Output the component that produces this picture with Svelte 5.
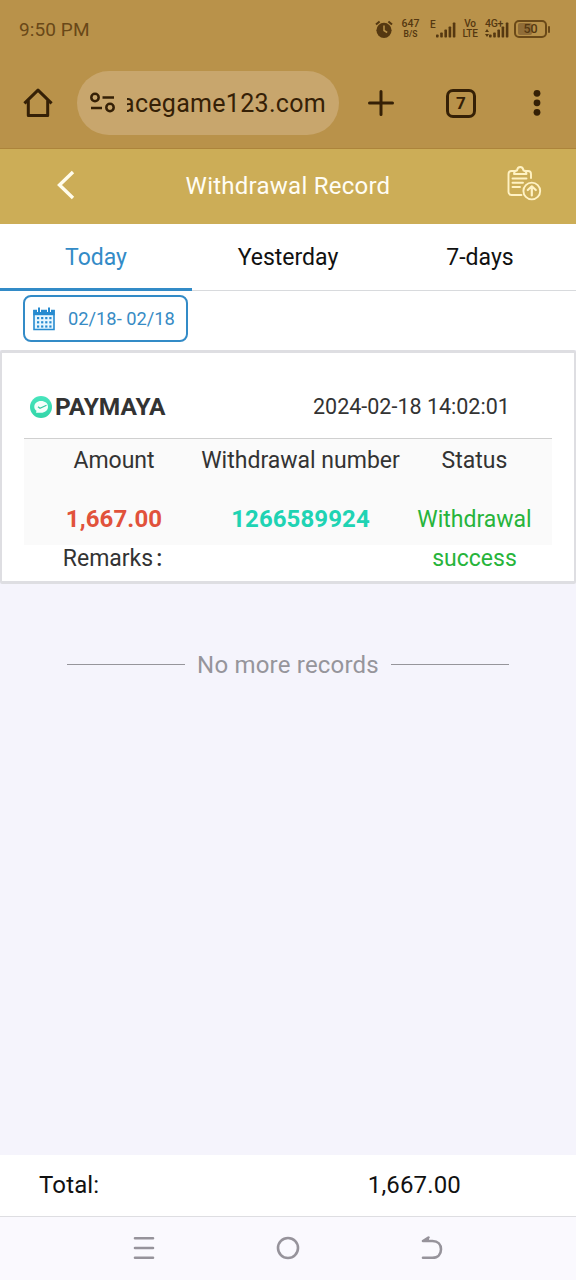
<script>
  const tabs = ['Today', 'Yesterday', '7-days'];
  let active = $state(0);
  const bars = [3, 5, 8, 11, 15];
  const dots = [0, 1, 2, 3].flatMap((c) => [0, 1, 2].map((r) => [4 + c * 4.1, 10 + r * 4.2]));
</script>

{#snippet signal()}
  <svg width="20" height="16" viewBox="0 0 20 16">
    {#each bars as h, i}
      <rect x={i * 4.2} y={15.5 - h} width="2.6" height={h} rx="0.7" fill="currentColor" />
    {/each}
  </svg>
{/snippet}

<div class="screen">
  <div class="status">
    <span class="clock">9:50 PM</span>
    <svg class="alarm" width="18" height="19" viewBox="0 0 18 19">
      <circle cx="9" cy="10.3" r="7.6" fill="currentColor" />
      <path d="M1 4.6 4.6 1.4M17 4.6 13.4 1.4" stroke="currentColor" stroke-width="2" fill="none" />
      <path d="M9 5.5v5l3.2 2" stroke="#b9924a" stroke-width="1.5" fill="none" />
    </svg>
    <div class="tiny speed"><span>647</span><small>B/S</small></div>
    <div class="sim one"><span>E</span>{@render signal()}</div>
    <div class="tiny volte"><span>Vo</span><span>LTE</span></div>
    <div class="sim two">
      <span>4G+</span>
      <div class="bars">
        <svg width="4" height="9" viewBox="0 0 4 9"><path d="M0 3 2 0l2 3zM0 5h4L2 8z" fill="currentColor" /></svg>
        {@render signal()}
      </div>
    </div>
    <div class="battery"><i></i><b>50</b></div>
    <div class="cap"></div>
  </div>

  <div class="browser">
    <svg class="home" width="30" height="30" viewBox="0 0 30 30" fill="none" stroke="currentColor" stroke-width="3">
      <path d="M1.4 15.3 15 2.2l13.600 13.100M5.300 12.500V27.500H24.700V12.500" stroke-linejoin="round" />
    </svg>
    <div class="url">
      <svg width="26" height="22" viewBox="0 0 26 22" fill="none" stroke="currentColor" stroke-width="2.500">
        <circle cx="5" cy="5.500" r="3.700" /><path d="M12.500 5.500H24M1 16H12" />
        <circle cx="20" cy="15.500" r="3.700" />
      </svg>
      <div class="address"><span>acegame123.com</span></div>
    </div>
    <svg class="plus" width="26" height="26" viewBox="0 0 26 26" stroke="currentColor" stroke-width="3" stroke-linecap="round">
      <path d="M13 1.500v23M1.500 13h23" />
    </svg>
    <div class="count">7</div>
    <svg class="more" width="8" height="28" viewBox="0 0 8 28" fill="currentColor">
      <circle cx="4" cy="4.300" r="3.400" /><circle cx="4" cy="13.800" r="3.400" /><circle cx="4" cy="23.300" r="3.400" />
    </svg>
  </div>

  <header>
    <svg class="back" width="20" height="30" viewBox="0 0 20 30" fill="none" stroke="#fffceb" stroke-width="3.400">
      <path d="M18 2 4.500 15 18 28" />
    </svg>
    <h1>Withdrawal Record</h1>
    <svg class="clip" width="36" height="36" viewBox="0 0 36 36" fill="none" stroke="#fff2c4" stroke-width="1.900" stroke-linecap="round" stroke-linejoin="round">
      <path d="M8.500 5H5.500Q2.500 5 2.500 8V26Q2.500 29 5.500 29H15.500M20 5H22Q25 5 25 8V12" />
      <path d="M8 8Q8 4.500 11 4.500Q11.500 1 14.200 1Q17 1 17.500 4.500Q20.500 4.500 20.500 8Z" />
      <path d="M6.500 12.500H20.500M6.500 16.700H17M6.500 21H14" />
      <circle cx="25.800" cy="25" r="8.400" />
      <path d="M25.800 29.500V20.500M21.800 24 25.800 20.300 29.800 24" stroke-width="2.200" />
    </svg>
  </header>

  <nav class="tabs">
    {#each tabs as tab, i}
      <button class:active={active === i} onclick={() => (active = i)}>{tab}</button>
    {/each}
  </nav>

  <div class="filter">
    <div class="range">
      <svg width="22" height="24" viewBox="0 0 22 24">
        <path d="M1 3.500H21V22.500H1Z" fill="#e8f7ff" stroke="#278bd0" stroke-width="1.600" />
        <path d="M.3 3H21.700V8.200H.3Z" fill="#278bd0" />
        <path d="M6 0v5M16 0v5" stroke="#fff" stroke-width="4" /><path d="M6 .5v4.500M16 .5v4.500" stroke="#278bd0" stroke-width="2" />
        {#each dots as [x, y]}
          <rect {x} {y} width="2.200" height="2.200" fill="#278bd0" />
        {/each}
      </svg>
      <span>02/18- 02/18</span>
    </div>
  </div>

  <section class="card">
    <div class="title">
      <svg width="22" height="22" viewBox="0 0 22 22">
        <defs><linearGradient id="mint" x2="0" y2="1"><stop stop-color="#48e5bd" /><stop offset="1" stop-color="#32d5a8" /></linearGradient></defs>
        <circle cx="11" cy="11" r="11" fill="url(#mint)" />
        <path d="M4.300 11C4.300 7.500 7 5 11 5s7 2.200 7 5.700-3 6-7 6H6l.5-2C5 13.800 4.300 12.500 4.300 11Z" fill="#f4fffb" />
        <path d="m8 10.700 2 1.600 6.500-3" fill="none" stroke="#35c9a2" stroke-width="1.200" />
      </svg>
      <strong>PAYMAYA</strong>
      <time>2024-02-18 14:02:01</time>
    </div>
    <div class="record">
      <div class="col">
        <span>Amount</span><b class="red">1,667.00</b><span class="remarks">Remarks<i>:</i></span>
      </div>
      <div class="col"><span>Withdrawal number</span><b class="teal">1266589924</b></div>
      <div class="col"><span>Status</span><span class="green">Withdrawal success</span></div>
    </div>
  </section>

  <main><div class="end"><i></i><span>No more records</span><i></i></div></main>

  <footer><span>Total:</span><span class="sum">1,667.00</span></footer>

  <div class="system">
    <svg width="24" height="26" viewBox="0 0 24 26"><path d="M3 3.200H21M3 13H21M3 22.800H21" /></svg>
    <svg width="24" height="26" viewBox="0 0 24 26"><circle cx="12" cy="13" r="10" /></svg>
    <svg width="24" height="26" viewBox="0 0 24 26"><path d="M3 6H12.500C18 6 21 9.500 21 14.300S18 22.800 12.500 22.800H3M3 6 8.500 2.500" /><path d="M3 6 8.500 2.500V6Z" fill="#96939b" stroke-width="1" /></svg>
  </div>
</div>

<style>
  :global(body) { margin: 0; }
  .screen { width: 576px; height: 1280px; display: flex; flex-direction: column; overflow: hidden; background: #f5f4fc; font-family: Roboto, sans-serif; color: #333; }
  .screen * { box-sizing: border-box; }
  svg { display: block; flex: none; }
  .status { height: 60px; flex: none; background: #b9924a; color: #553811; display: flex; align-items: center; padding: 0 0 2px 19px; }
  .clock { font-size: 19px; width: 356px; letter-spacing: 0.1px; color: #694818; }
  .tiny { display: flex; flex-direction: column; align-items: center; font-size: 10.500px; line-height: 10px; font-weight: 500; }
  .speed { margin-left: 8px; width: 19px; }
  .tiny small { font-size: 8.500px; font-weight: 600; }
  .sim { display: flex; height: 20px; font-size: 10px; line-height: 10px; font-weight: 500; }
  .one { margin-left: 10px; align-items: flex-end; width: 27px; height: 18px; }
  .one span { align-self: flex-start; width: 6px; flex: none; }
  .volte { margin-left: 5px; width: 16px; font-size: 10px; }
  .volte span { letter-spacing: -0.3px; }
  .two { margin-left: 7px; width: 26px; flex-direction: column; }
  .two span { height: 3px; font-size: 10.500px; letter-spacing: -0.3px; }
  .bars { display: flex; align-items: flex-end; gap: 0; height: 16px; }
  .battery { margin-left: 3px; width: 33px; height: 18px; border: 2px solid #6a4918; border-radius: 5px; display: grid; align-items: center; }
  .battery i, .battery b { grid-area: 1 / 1; }
  .battery i { width: 14px; height: 12px; margin-left: 2px; background: #906d38; border-radius: 2px; }
  .battery b { text-align: center; font-size: 12.500px; line-height: 14px; font-weight: 500; }
  .cap { width: 2px; height: 7px; margin-left: 1px; background: #6a4918; border-radius: 1px; }
  .browser { height: 89px; flex: none; background: #b9924a; border-bottom: 1px solid #ad843b; color: #352006; display: flex; align-items: center; padding: 0 0 2px 23px; }
  .url { width: 262px; height: 64px; margin-left: 24px; border-radius: 32px; background: #c8a66d; display: flex; align-items: center; padding-left: 13px; }
  .address { width: 199px; margin-left: 11px; padding-top: 2px; overflow: hidden; display: flex; justify-content: flex-end; font-size: 25px; line-height: 32px; letter-spacing: 0.3px; }
  .plus { margin-left: 29px; }
  .count { width: 30px; height: 29px; margin-left: 52px; border: 3px solid currentColor; border-radius: 7px; text-align: center; font-size: 17px; line-height: 23px; font-weight: 700; }
  .more { margin-left: 57px; }
  header { height: 75px; flex: none; background: #ccad57; display: flex; align-items: center; padding-bottom: 3px; }
  .back { margin-left: 55px; }
  h1 { width: 424px; margin: 0 6px 0 1px; padding: 1px 0 0; text-align: center; font-size: 24px; font-weight: 400; letter-spacing: 0.25px; color: #fffdf4; }
  .clip { margin-bottom: 2px; }
  .tabs { height: 67px; flex: none; display: grid; grid-template-columns: repeat(3, 1fr); background: #fff; }
  .tabs button { border: 0; border-bottom: 1px solid #d8dadd; background: #fff; padding: 1px 0 0; font: 400 23px Roboto, sans-serif; color: #111; }
  .tabs .active { color: #338bc7; border-bottom: 3px solid #338bc7; padding: 2px 0 0; }
  .filter { height: 59px; flex: none; background: #fff; padding: 4px 23px; }
  .range { width: 165px; height: 47px; border: 2px solid #338bc7; border-radius: 8px; display: flex; align-items: center; gap: 13px; padding-left: 8px; font-size: 18.300px; color: #378bc4; white-space: nowrap; }
  .card { height: 234px; flex: none; border: solid #dedee2; border-width: 3px 2px; border-radius: 2px; background: #fff; padding: 22px 22px 0; }
  .title { height: 64px; display: flex; align-items: center; border-bottom: 1px solid #d0d0d0; padding-left: 6px; }
  .title strong { margin-left: 3px; font-size: 24.500px; width: 258px; }
  .title time { font-size: 21.500px; white-space: nowrap; }
  .record { height: 106px; background: #fafafa; display: grid; grid-template-columns: 180px 193px 155px; font-size: 23px; text-align: center; }
  .col { display: flex; flex-direction: column; align-items: center; line-height: 39px; padding-top: 2px; white-space: nowrap; }
  .col > :nth-child(2) { margin-top: 20px; }
  .col b { font-size: 24px; letter-spacing: 0.1px; }
  .remarks { padding-right: 3px; }
  .remarks i { font-style: normal; font-weight: 500; margin-left: 3px; }
  .red { color: #e1523b; }
  .teal { color: #20d3b3; }
  .green { color: #27b43b; white-space: normal; padding: 0 16px; }
  main { flex: 1; }
  .end { margin-top: 60px; display: flex; justify-content: center; align-items: center; height: 41px; gap: 12px; font-size: 24px; letter-spacing: 0.2px; color: #96959b; }
  .end i { width: 118px; height: 1.500px; background: #96959b; }
  footer { height: 62px; flex: none; background: #fff; border-bottom: 1px solid #dedee2; display: flex; align-items: center; padding: 0 39px 2px; font-size: 24px; letter-spacing: 0.15px; color: #111; }
  .sum { margin-left: auto; margin-right: 76px; }
  .system { height: 63px; flex: none; background: #faf9fe; display: flex; justify-content: center; align-items: center; gap: 120px; padding-bottom: 1px; }
  .system svg { fill: none; stroke: #96939b; stroke-width: 2.600; stroke-linecap: round; stroke-linejoin: round; }
</style>
